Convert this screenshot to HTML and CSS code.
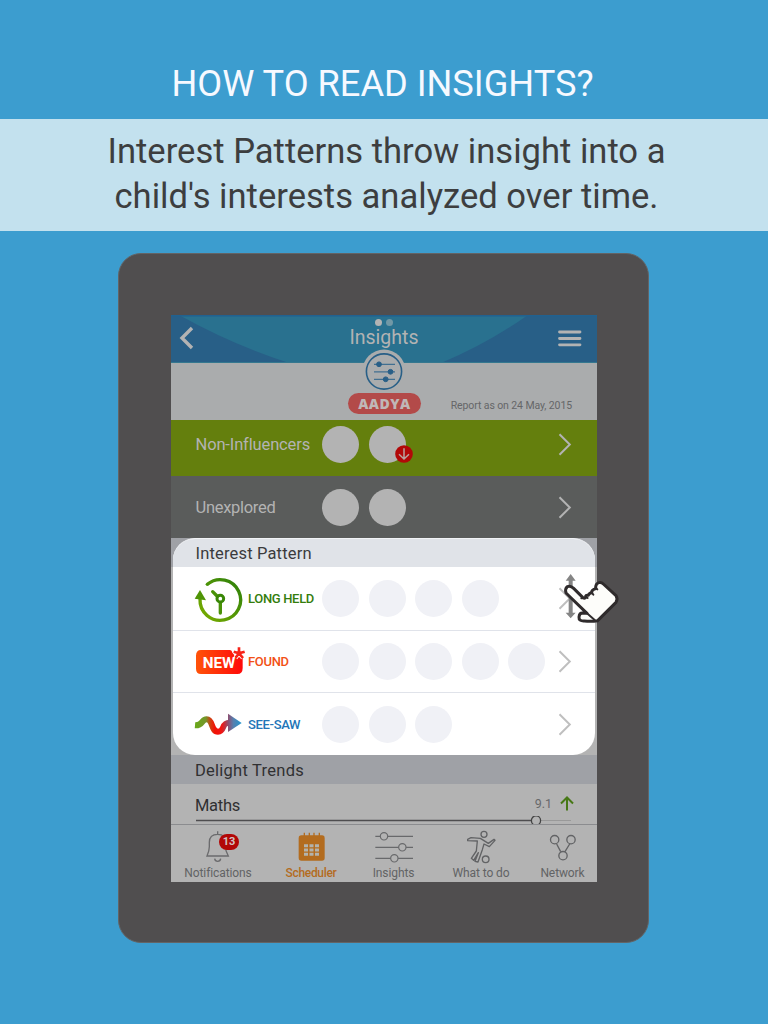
FILE: index.html
```html
<!DOCTYPE html>
<html lang="en">
<head>
<meta charset="utf-8">
<title>How to read insights?</title>
<link rel="stylesheet" href="styles.css">
</head>
<body>
<h1 class="title"><span>HOW TO READ INSIGHTS?</span></h1>
<p class="banner"><span class="l1">Interest Patterns throw insight into a</span><span class="l2">child's interests analyzed over time.</span></p>
<main class="tablet">
  <div class="screen">
    <header class="bar">
      <svg class="bar-bg" width="426" height="48" viewBox="0 0 426 48"><path d="M0 0H426V48H0Z" fill="#285f87"/><path d="M8 0Q62 30 118 48H270Q316 29 357 0Z" fill="#29718f"/><path d="M0 .5H426" stroke="#21618f" stroke-width="2"/><path d="M0 47.5H426" stroke="#35788f"/></svg>
      <svg class="back" width="16" height="24" viewBox="0 0 16 24"><path d="M13 2L3 12L13 22" fill="none" stroke="#b3b3b3" stroke-width="3.4"/></svg>
      <div class="bar-title"><i class="dot"></i><i class="dot dim"></i><b>Insights</b></div>
      <svg class="menu" width="24" height="17" viewBox="0 0 24 17"><path d="M1.5 2H22M1.5 8.5H22M1.5 14.8H22" stroke="#b3b3b3" stroke-width="2.8" stroke-linecap="round"/></svg>
    </header>
    <section class="profile">
      <svg class="badge" width="44" height="44" viewBox="0 0 44 44"><circle cx="22" cy="22" r="21.5" fill="#aaacad"/><g stroke="#285f87" fill="#285f87"><circle cx="22" cy="22.5" r="17.6" fill="none" stroke-width="1.6"/><path d="M12 15.3H33M12 22.8H33M12 30.3H33" stroke="#416f91" stroke-width="1.2"/><circle cx="17" cy="15.3" r="2.4"/><circle cx="28.5" cy="22.8" r="2.4"/><circle cx="23.7" cy="30.3" r="2.4"/></g></svg>
      <strong class="name">AADYA</strong>
      <span class="report">Report as on 24 May, 2015</span>
    </section>
    <section class="row green"><span class="label non">Non-Influencers</span><div class="circles"><i></i><i class="marked"><svg width="18" height="18" viewBox="0 0 18 18"><circle cx="9" cy="9" r="8.8" fill="#b20808"/><path d="M9 3.3V14M4 9.2L9 14L14 9.2" fill="none" stroke="#b8a3a0" stroke-width="1.5"/></svg></i></div><svg class="chev" width="14" height="23" viewBox="0 0 14 23"><path d="M1.5 1.2L11.8 11.5L1.5 21.8" fill="none" stroke="#b3b3b3" stroke-width="2"/></svg></section>
    <section class="row grey"><span class="label un">Unexplored</span><div class="circles"><i></i><i></i></div><svg class="chev" width="14" height="23" viewBox="0 0 14 23"><path d="M1.5 1.2L11.8 11.5L1.5 21.8" fill="none" stroke="#b3b3b3" stroke-width="2"/></svg></section>
    <div class="card-wrap"><section class="card">
      <h2 class="card-head"><span>Interest Pattern</span></h2>
      <div class="row light"><svg class="ico" width="50" height="48" viewBox="0 0 150 144"><defs><linearGradient id="g" x1="1" x2="0" y1="0" y2="1"><stop offset="0" stop-color="#2c7f0b"/><stop offset="1" stop-color="#7bae00"/></linearGradient></defs><path d="M37 28A61 61 0 1 1 15 72" fill="none" stroke="url(#g)" stroke-width="10"/><circle cx="37" cy="28" r="5" fill="#4a9208"/><path d="M15 45L-1 71L33 76Z" fill="#4f9406"/><path d="M53 50L66 63M76 82V114" stroke="#4a9208" stroke-width="10" stroke-linecap="round"/><circle cx="76" cy="71" r="10" fill="none" stroke="#398707" stroke-width="9"/></svg><span class="tag long">LONG HELD</span><div class="circles"><i></i><i></i><i></i><i></i></div><svg class="chev" width="14" height="23" viewBox="0 0 14 23"><path d="M1.5 1.2L11.8 11.5L1.5 21.8" fill="none" stroke="#bfbfbf" stroke-width="2"/></svg></div>
      <div class="row light second"><svg class="ico" width="50" height="48" viewBox="0 0 150 144"><defs><linearGradient id="r"><stop offset="0" stop-color="#ff5309"/><stop offset="1" stop-color="#ff0909"/></linearGradient></defs><path d="M18 36H105Q111 36 112 44L119 52H143V90Q143 108 127 108H18Q3 108 3 92V53Q3 36 18 36Z" fill="url(#r)"/><path d="M132 29V46M132 46L117 41M132 46L148 41M132 46L121 59M132 46L144 59" stroke="#fff" stroke-width="14"/><path d="M132 28V46M132 46L116 41M132 46L149 41M132 46L121 60M132 46L144 60" stroke="#f72318" stroke-width="8"/><text class="new" x="23" y="90" textLength="98" lengthAdjust="spacingAndGlyphs">NEW</text></svg><span class="tag found">FOUND</span><div class="circles"><i></i><i></i><i></i><i></i><i></i></div><svg class="chev" width="14" height="23" viewBox="0 0 14 23"><path d="M1.5 1.2L11.8 11.5L1.5 21.8" fill="none" stroke="#bfbfbf" stroke-width="2"/></svg></div>
      <div class="row light third"><svg class="ico" width="50" height="48" viewBox="0 0 150 144"><defs><linearGradient id="w" gradientUnits="userSpaceOnUse" x1="0" x2="139" y1="0" y2="0"><stop offset="0" stop-color="#69a818"/><stop offset=".23" stop-color="#74962b"/><stop offset=".34" stop-color="#d33b10"/><stop offset=".43" stop-color="#f31106"/><stop offset=".58" stop-color="#ef1615"/><stop offset=".72" stop-color="#8b5173"/><stop offset=".83" stop-color="#567fae"/><stop offset="1" stop-color="#2497cf"/></linearGradient></defs><path d="M0 76C24 78 18 58 35 58C55 58 47 95 69 95C91 95 77 67 105 68" fill="none" stroke="url(#w)" stroke-width="18"/><path d="M99 41L140 69L99 96Z" fill="url(#w)"/></svg><span class="tag see">SEE-SAW</span><div class="circles"><i></i><i></i><i></i></div><svg class="chev" width="14" height="23" viewBox="0 0 14 23"><path d="M1.5 1.2L11.8 11.5L1.5 21.8" fill="none" stroke="#bfbfbf" stroke-width="2"/></svg></div>
    </section></div>
    <h2 class="trend-head"><span>Delight Trends</span></h2>
    <section class="maths"><span class="subject">Maths</span><span class="score">9.1</span><svg class="up" width="14" height="15" viewBox="0 0 14 15"><path d="M7 14.5V2M1 7.5L7 1.5L13 7.5" fill="none" stroke="#477816" stroke-width="2"/></svg>
      <svg class="slider" width="376" height="9" viewBox="0 0 376 9"><path d="M0 4.5H335" stroke="#4e4d4f" stroke-width="1.3"/><path d="M345 4.5H375" stroke="#999" stroke-width="1"/><circle cx="340" cy="4.5" r="4.6" fill="#b3b3b3" stroke="#444" stroke-width="1.3"/></svg></section>
    <nav class="tabs">
      <a class="tab t1"><svg width="40" height="34" viewBox="0 0 120 102"><g transform="translate(9)" fill="none" stroke="#6b6b6d" stroke-width="4"><path d="M50 10V18M18 84H82L75 68V43Q75 19 50 19Q25 19 25 43V56Q25 67 18 84ZM41 92Q42 100 50 100Q58 100 59 92"/></g></svg><em>13</em><span>Notifications</span></a>
      <a class="tab t2"><svg width="40" height="34" viewBox="0 0 120 102"><g transform="translate(2 0)"><rect x="21" y="22" width="78" height="76" rx="8" fill="#b36c1f"/><path d="M38 14V26M53 14V26M67 14V26M83 14V26" stroke="#b36c1f" stroke-width="4"/><path d="M37 53H82M37 66H82M37 79H82" stroke="#b3b3ad" stroke-width="9" stroke-dasharray="12 4.5"/></g></svg><span>Scheduler</span></a>
      <a class="tab t3"><svg width="40" height="34" viewBox="0 0 120 102"><g transform="translate(1 -1)" fill="#b3b3b3" stroke="#68696b" stroke-width="3.5"><path d="M3 26H116M3 59H116M3 92H116"/><circle cx="29" cy="26" r="11"/><circle cx="84" cy="59" r="11"/><circle cx="60" cy="92" r="11"/></g></svg><span>Insights</span></a>
      <a class="tab t4"><svg width="40" height="34" viewBox="0 0 120 102"><g transform="translate(3 -1)" fill="none" stroke="#626365" stroke-width="4" stroke-linejoin="round"><circle cx="66" cy="20" r="9"/><path d="M17 35L27 30L55 32L79 47L96 35L99 38L82 57L66 49L61 66L48 103L39 101L49 75L35 98L28 92L43 70L46 40L17 39Z"/><circle cx="71" cy="95" r="10"/></g></svg><span>What to do</span></a>
      <a class="tab t5"><svg width="40" height="34" viewBox="0 0 120 102"><g transform="translate(0 -1)" fill="none" stroke="#626365" stroke-width="4"><path d="M41 49L53 72M80 49L66 72"/><circle cx="35" cy="36" r="12.5"/><circle cx="84" cy="36" r="12.5"/><circle cx="60" cy="84" r="12.5"/></g></svg><span>Network</span></a>
    </nav>
  </div>
  <svg class="gesture" width="60" height="55" viewBox="240 110 180 165"><path d="M272 116L287 136H278V232H287L272 249L257 232H266V136H257Z" fill="#858585"/><path d="M321 234L258 173Q254 161 262 154Q272 150 281 159L308 186Q312 191 317 186Q316 178 325 180Q328 172 335 172Q334 164 347 160Q346 145 357 142Q364 140 370 146L408 181Q414 190 408 201L353 256Q335 259 313 257Q296 258 297 245Q298 233 307 233Z" fill="#fdfdfa" stroke="#2f2b2c" stroke-width="9" stroke-linejoin="round" stroke-linecap="round"/><path d="M304 189L314 187M317 184L323 188M335 172L340 178M347 157L352 162M321 234L344 254" fill="none" stroke="#2f2b2c" stroke-width="6" stroke-linecap="round"/></svg>
</main>
</body>
</html>
```
FILE: styles.css
```css
* { box-sizing: border-box; }
body { margin: 0; width: 768px; height: 1024px; overflow: hidden; background: #3c9dcf; font-family: Roboto, "Liberation Sans", sans-serif; }
h1, h2, p { margin: 0; font-weight: 400; }
i, em { font-style: normal; }
.title { height: 119px; padding: 62px 3px 0 0; text-align: center; color: #f6f9ff; font-size: 36.2px; line-height: 44px; white-space: nowrap; }
.banner { height: 112px; padding: 10px 0 0 5px; background: #c3e1ee; color: #3d3e3f; font-size: 34.6px; line-height: 45px; text-align: center; white-space: nowrap; }
.banner span { display: block; }
.tablet { position: relative; width: 531px; height: 690px; margin: 22px 0 0 118px; padding: 61px 52px; border-radius: 23px; background: #504e4f; border: 1px solid #636466; }
.screen { width: 426px; height: 567px; background: #b3b3b3; display: flex; flex-direction: column; overflow: hidden; }
.bar { position: relative; display: flex; height: 48px; flex: none; }
.bar-bg { position: absolute; inset: 0; }
.back, .menu, .bar-title { position: relative; }
.back { margin: 11px 0 0 8px; }
.bar-title { width: 80px; margin-left: 149px; padding-top: 4px; text-align: center; line-height: 0; }
.dot { display: inline-block; width: 7px; height: 7px; border-radius: 50%; background: #b3b3b3; margin: 0 2px; }
.dot.dim { background: #7198a6; }
.bar-title b { display: block; color: #b3b3b3; font-size: 19.5px; font-weight: 400; line-height: 24px; }
.menu { margin: 15px 0 0 134px; }
.profile { position: relative; height: 57px; flex: none; background: #aaacad; display: flex; align-items: center; padding: 24px 25px 0 177px; justify-content: space-between; }
.badge { position: absolute; left: 191px; top: -14px; }
.name { width: 73px; height: 21px; border-radius: 11px; background: #b34a49; color: #c0b7b7; font: 800 14px/22px "Open Sans", sans-serif; text-align: center; letter-spacing: .5px; }
.report { font-size: 10.5px; color: #656668; letter-spacing: -.1px; padding-top: 3px; white-space: nowrap; }
.row { display: flex; align-items: center; position: relative; flex: none; padding-left: 24.5px; color: #b3b3b3; font-size: 16.5px; }
.green { height: 56px; background: #647f0d; padding-bottom: 7px; }
.grey { height: 62px; background: #5a5c5b; }
.label { width: 126.5px; white-space: nowrap; }
.non { letter-spacing: -.14px; }
.un { letter-spacing: -.3px; }
.circles { width: 224px; display: flex; gap: 9.6px; margin-right: 12px; }
.circles i { position: relative; width: 37px; height: 37px; border-radius: 50%; background: #b3b3b3; }
.marked svg { position: absolute; left: 26px; top: 19px; }
.chev { flex: none; }
.card-wrap { height: 217px; flex: none; padding: 0 2px; background: linear-gradient(#9fa1a6 0 29px, #b3b3b3 29px); }
.card { height: 217px; border-radius: 22px; overflow: hidden; background: #fff; border-top: 1px solid #f1f3f6; }
.card-head { height: 28px; padding-left: 22.5px; background: #e0e3e8; color: #3b3b3d; font-size: 16.5px; line-height: 29px; letter-spacing: .17px; }
.light { height: 63px; padding-left: 22px; }
.second, .third { border-top: 1px solid #e0e3ea; }
.second { height: 62px; }
.light .circles i { background: #f0f1f6; }
.ico { overflow: visible; margin-right: 3px; flex: none; }
.new { font: 700 46px Roboto, sans-serif; fill: #fff; }
.tag { width: 74px; font-size: 13px; font-weight: 500; letter-spacing: -.33px; white-space: nowrap; }
.long { color: #347d0d; }
.found { color: #f25116; }
.see { color: #2275b8; }
.trend-head { height: 29px; flex: none; padding-left: 24px; background: #9fa1a6; color: #303032; font-size: 16.5px; line-height: 31px; letter-spacing: .25px; }
.maths { height: 40px; flex: none; position: relative; display: flex; padding: 12px 23px 0 24px; font-size: 16.5px; line-height: 20px; color: #303032; }
.subject { flex: 1; letter-spacing: -.3px; }
.score { font-size: 12.5px; line-height: 16px; color: #68696b; margin-right: 8px; }
.slider { position: absolute; left: 25px; bottom: -1px; }
.tabs { height: 58px; flex: none; position: relative; border-top: 1px solid #8b8c8f; background: #b3b3b3; display: grid; grid-template-columns: 94px 92px 73px 102px 61px; color: #626365; font-size: 12px; }
.tab { position: relative; display: flex; flex-direction: column; align-items: center; padding-top: 3px; line-height: 15px; white-space: nowrap; letter-spacing: -.1px; }
.tab svg { overflow: visible; margin-bottom: 4px; flex: none; }
.tab em { position: absolute; left: 48px; top: 9px; width: 20px; height: 16px; border-radius: 8px; background: #b20707; color: #d0c2c2; font-size: 11px; font-weight: 700; line-height: 16px; text-align: center; }
.t2 { color: #b36c1f; font-weight: 500; letter-spacing: -.3px; }
.gesture { position: absolute; left: 441px; top: 318px; }
```
